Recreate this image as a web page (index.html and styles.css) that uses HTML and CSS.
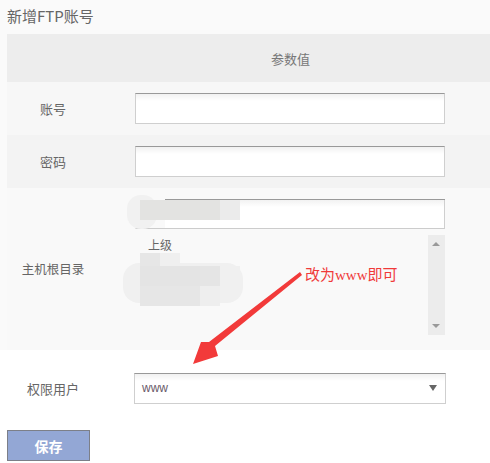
FILE: index.html
```html
<!DOCTYPE html>
<html lang="zh">
<head>
<meta charset="utf-8">
<link rel="stylesheet" href="styles.css">
</head>
<body>
<div class="page">
  <div class="title">新增FTP账号</div>
  <div class="form">
    <div class="row head">
      <div class="label"></div>
      <div class="value head-text">参数值</div>
    </div>
    <div class="row r1">
      <div class="label">账号</div>
      <div class="value"><div class="input"></div></div>
    </div>
    <div class="row r2">
      <div class="label">密码</div>
      <div class="value"><div class="input"></div></div>
    </div>
    <div class="row r3">
      <div class="label">主机根目录</div>
      <div class="value dir">
        <div class="input blurred">
          <span class="blob b1"></span>
          <span class="blk k1"></span>
          <span class="blk k2"></span>
        </div>
        <div class="listbox">
          <div class="list">
            <div class="up">上级</div>
            <div class="blurgrid">
              <span class="blob b2"></span>
              <span class="blk g1"></span>
              <span class="blk g2"></span>
              <span class="blk g3"></span>
              <span class="blk g4"></span>
              <span class="blk g5"></span>
              <span class="blk g6"></span>
              <span class="blk g7"></span>
            </div>
          </div>
          <div class="scroll">
            <span class="tri-up"></span>
            <span class="tri-down"></span>
          </div>
        </div>
      </div>
    </div>
    <div class="row r4">
      <div class="label">权限用户</div>
      <div class="value"><div class="input select"><span class="sel-text">www</span><span class="caret"></span></div></div>
    </div>
  </div>
  <div class="actions"><button class="save">保存</button></div>

  <div class="note">改为www即可</div>
  <svg class="arrow" width="490" height="463" viewBox="0 0 490 463">
    <polygon points="300,272 302,275 215,346 218,356 193,364 201,342 209,342" fill="#f23a3a"/>
  </svg>
</div>
</body>
</html>
```

FILE: styles.css
```css
* { box-sizing: border-box; }
html, body { margin: 0; padding: 0; background: #fff; }
body {
  font-family: "Noto Sans CJK SC", "Liberation Sans", sans-serif;
  font-size: 13px;
  color: #666;
}
.page { position: relative; width: 490px; height: 463px; overflow: hidden; }
.title {
  background: #fafafa;
  height: 34px;
  padding: 5px 0 0 7px;
  font-size: 15px;
  color: #666;
  line-height: 22px;
}
.form { padding-left: 7px; background: linear-gradient(#fafafa, #fafafa) 0 0 / 100% 316px no-repeat; }
.row { display: grid; grid-template-columns: 92px 1fr; align-items: center; }
.label { text-align: center; color: #666; }
.value { padding-left: 36px; padding-right: 45px; }
.head { height: 48px; background: #ededed; }
.head-text { padding-left: 172px; color: #777; }
.r1 { height: 53px; background: #f7f7f7; }
.r2 { height: 53px; background: #f3f3f3; }
.r3 { height: 162px; background: #f9f9f9; align-items: start; }
.r3 .label { padding-top: 71px; font-size: 12.5px; }
.r4 { height: 74px; background: #fff; padding-top: 2px; }
.r4 .label { padding-left: 0; }
.r4 .value { padding-left: 35px; padding-right: 44px; }
.input {
  height: 31px;
  background: linear-gradient(#f1f1f1, #fff 7px);
  border: 1px solid #cfcfcf;
  border-top-color: #999;
}
.dir { padding-top: 11px; }
.blurred { position: relative; height: 30px; border-top-color: transparent; border-left-color: transparent; border-bottom-color: #ccc; background: transparent; }
.blurred::before { content: ""; position: absolute; left: 29px; right: -1px; top: -1px; border-top: 1px solid #999; }
.blurred::after { content: ""; position: absolute; left: 29px; right: 0; top: 0; height: 28px; background: linear-gradient(#f2f2f2, #fff 7px); }
.blob { position: absolute; border-radius: 14px; background: #f1f1f1; z-index: 1; }
.b1 { left: -9px; top: -5px; width: 30px; height: 34px; }
.blk { position: absolute; z-index: 2; }
.k1 { left: 4px; top: 0; width: 80px; height: 20px; background: #e3e3e1; }
.k2 { left: 84px; top: 0; width: 20px; height: 20px; background: #ebebeb; }
.listbox { display: flex; height: 100px; margin-top: 6px; }
.list { flex: 1; padding-left: 13px; }
.up { line-height: 16px; padding-top: 2px; color: #666; font-size: 12px; }
.blurgrid { position: relative; height: 60px; margin-left: -13px; }
.b2 { left: -12px; top: 10px; width: 120px; height: 40px; background: #f0f0f0; border-radius: 16px; z-index: 0; }
.g1 { left: 5px; top: 0; width: 20px; height: 13px; background: #e6e6e6; }
.g2 { left: 25px; top: 0; width: 20px; height: 13px; background: #efefef; }
.g3 { left: 5px; top: 13px; width: 60px; height: 20px; background: #e4e4e4; }
.g4 { left: 65px; top: 13px; width: 40px; height: 20px; background: #e5e5e5; }
.g5 { left: 85px; top: 13px; width: 20px; height: 20px; background: #f0f0f0; }
.g6 { left: 5px; top: 33px; width: 60px; height: 20px; background: #e6e6e6; }
.g7 { left: 65px; top: 33px; width: 20px; height: 20px; background: #eeeeee; }
.scroll {
  position: relative;
  width: 17px;
  background: #ececec;
}
.tri-up, .tri-down { position: absolute; left: 4px; width: 0; height: 0; border-left: 4px solid transparent; border-right: 4px solid transparent; }
.tri-up { top: 7px; border-bottom: 4px solid #999; }
.tri-down { bottom: 7px; border-top: 4px solid #999; }
.select { position: relative; display: flex; align-items: center; justify-content: space-between; padding: 0 8px 0 7px; height: 31px; }
.sel-text { font-family: "Liberation Sans", sans-serif; font-size: 12px; color: #6a5a6a; }
.caret { width: 0; height: 0; border-left: 4px solid transparent; border-right: 4px solid transparent; border-top: 6px solid #666; margin-right: 0; }
.actions { padding: 6px 0 0 7px; }
.save {
  width: 83px;
  height: 31px;
  background: #93a7d5;
  border: 1px solid #7c7f88;
  color: #fff;
  font-family: "Noto Sans CJK SC", sans-serif;
  font-weight: bold;
  font-size: 14px;
  padding: 0;
}
.note {
  position: absolute;
  left: 305px;
  top: 265px;
  color: #f03a3a;
  font-size: 15px;
  font-family: "Liberation Serif", "Noto Sans CJK SC", serif;
  line-height: 20px;
}
.arrow { position: absolute; left: 0; top: 0; pointer-events: none; }
```
